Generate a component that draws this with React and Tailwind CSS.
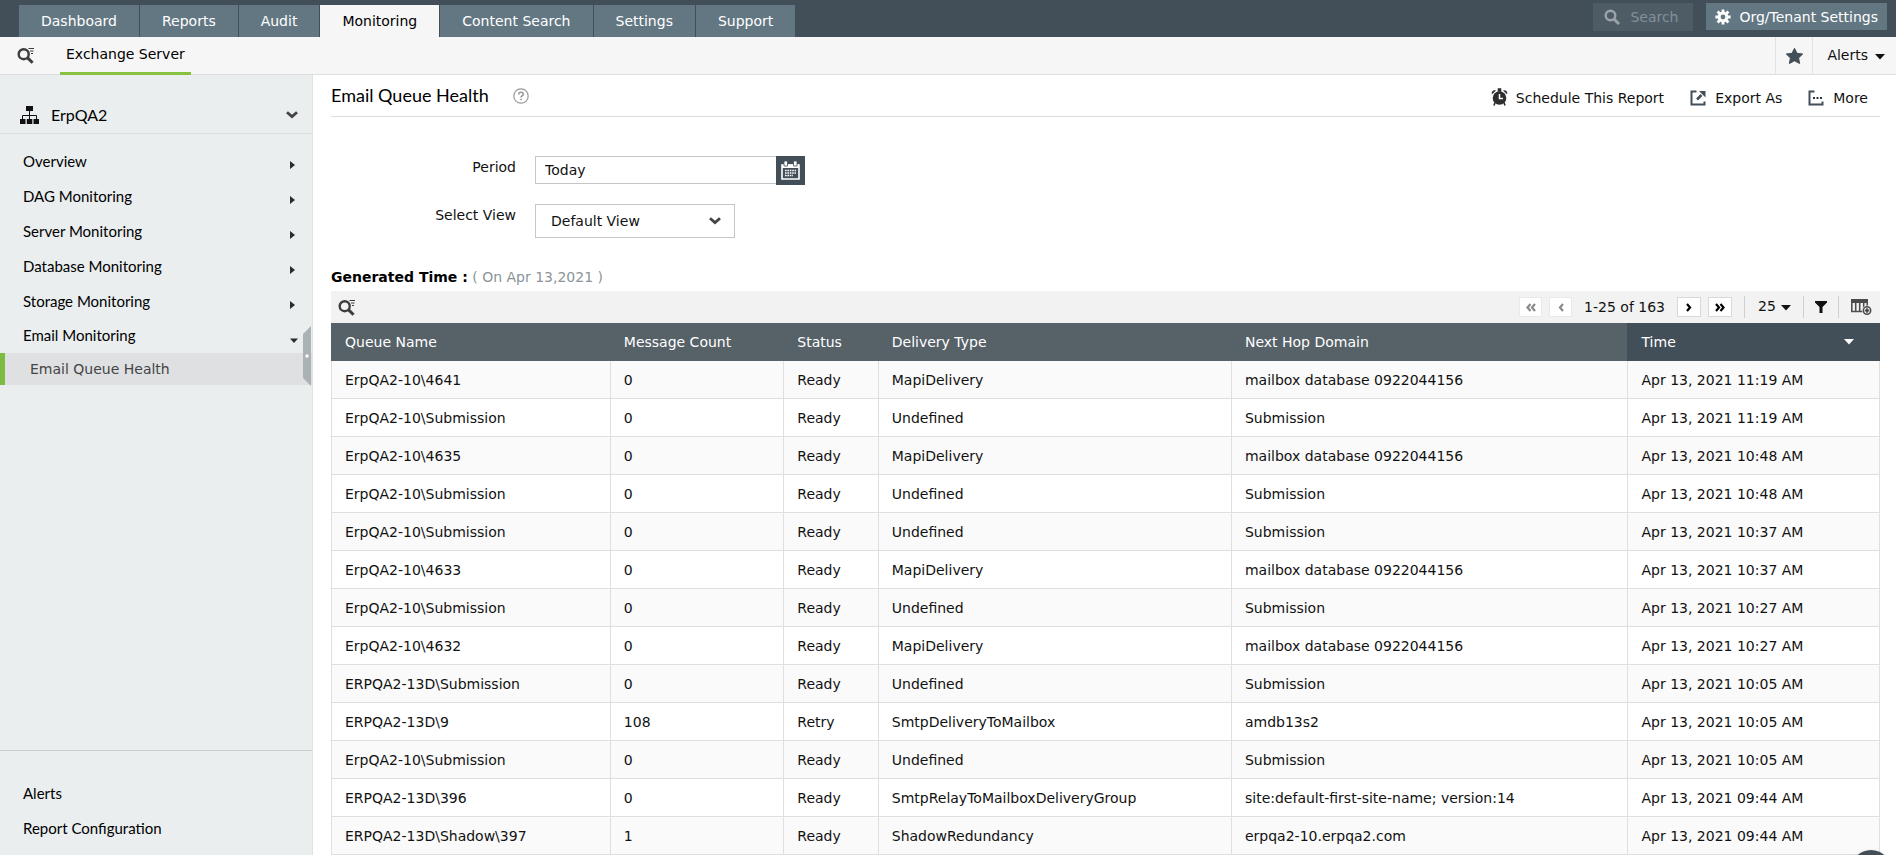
import React from "react";

const TABS = ["Dashboard", "Reports", "Audit", "Monitoring", "Content Search", "Settings", "Support"];

const MENU = [
  "Overview",
  "DAG Monitoring",
  "Server Monitoring",
  "Database Monitoring",
  "Storage Monitoring",
];

const ROWS = [
  ["ErpQA2-10\\4641", "0", "Ready", "MapiDelivery", "mailbox database 0922044156", "Apr 13, 2021 11:19 AM"],
  ["ErpQA2-10\\Submission", "0", "Ready", "Undefined", "Submission", "Apr 13, 2021 11:19 AM"],
  ["ErpQA2-10\\4635", "0", "Ready", "MapiDelivery", "mailbox database 0922044156", "Apr 13, 2021 10:48 AM"],
  ["ErpQA2-10\\Submission", "0", "Ready", "Undefined", "Submission", "Apr 13, 2021 10:48 AM"],
  ["ErpQA2-10\\Submission", "0", "Ready", "Undefined", "Submission", "Apr 13, 2021 10:37 AM"],
  ["ErpQA2-10\\4633", "0", "Ready", "MapiDelivery", "mailbox database 0922044156", "Apr 13, 2021 10:37 AM"],
  ["ErpQA2-10\\Submission", "0", "Ready", "Undefined", "Submission", "Apr 13, 2021 10:27 AM"],
  ["ErpQA2-10\\4632", "0", "Ready", "MapiDelivery", "mailbox database 0922044156", "Apr 13, 2021 10:27 AM"],
  ["ERPQA2-13D\\Submission", "0", "Ready", "Undefined", "Submission", "Apr 13, 2021 10:05 AM"],
  ["ERPQA2-13D\\9", "108", "Retry", "SmtpDeliveryToMailbox", "amdb13s2", "Apr 13, 2021 10:05 AM"],
  ["ErpQA2-10\\Submission", "0", "Ready", "Undefined", "Submission", "Apr 13, 2021 10:05 AM"],
  ["ERPQA2-13D\\396", "0", "Ready", "SmtpRelayToMailboxDeliveryGroup", "site:default-first-site-name; version:14", "Apr 13, 2021 09:44 AM"],
  ["ERPQA2-13D\\Shadow\\397", "1", "Ready", "ShadowRedundancy", "erpqa2-10.erpqa2.com", "Apr 13, 2021 09:44 AM"],
];

const HEADINGS = ["Queue Name", "Message Count", "Status", "Delivery Type", "Next Hop Domain"];

function SearchListIcon() {
  return (
    <svg width="18" height="17" viewBox="0 0 18 17" fill="none" stroke="#3d3d3d" aria-hidden="true">
      <circle cx="6.700" cy="7.200" r="5" strokeWidth="2.400" />
      <path d="M10.300 10.600l5.300 5.200" strokeWidth="3" />
      <path d="M11.500 1.500H17M13 4h3.500M14 6.500h2" strokeWidth="1.200" />
    </svg>
  );
}

function OrgIcon() {
  return (
    <svg width="19" height="18" viewBox="0 0 19 18" aria-hidden="true">
      <path d="M6 0h7v5H6zM0 13h5.500v5H0zM6.800 13h5.500v5H6.800zM13.500 13H19v5h-5.500z" fill="#111" />
      <path d="M9.500 5v8M2.500 13V9.500h14V13" fill="none" stroke="#111" />
    </svg>
  );
}

function Chevron() {
  return (
    <svg width="12" height="8" viewBox="0 0 12 8" fill="none" stroke="#444" strokeWidth="2.8" aria-hidden="true">
      <path d="M1 1.2l5 4.4 5-4.400" />
    </svg>
  );
}

function Caret({ className }) {
  return (
    <svg width="10" height="6" viewBox="0 0 10 6" className={className} aria-hidden="true">
      <path d="M0 0h10L5 5.5z" fill="currentColor" />
    </svg>
  );
}

function RightCaret() {
  return (
    <svg width="5" height="8" viewBox="0 0 5 8" aria-hidden="true">
      <path d="M0 0l5 4-5 4z" fill="#2b2b2b" />
    </svg>
  );
}

function GearIcon() {
  return (
    <svg width="16" height="16" viewBox="0 0 16 16" fill="none" stroke="#fff" aria-hidden="true">
      <circle cx="8" cy="8" r="3.9" strokeWidth="3" />
      <path
        d="M8 .4v3M8 12.6v3M.4 8h3M12.6 8h3M2.6 2.6l2.2 2.2M11.2 11.2l2.2 2.2M2.6 13.4l2.2-2.2M11.2 4.8l2.2-2.2"
        strokeWidth="2.8"
      />
    </svg>
  );
}

function ClockIcon() {
  return (
    <svg width="17" height="19" viewBox="0 0 17 19" aria-hidden="true">
      <circle cx="8.500" cy="10" r="6.8" fill="#2e2e2e" />
      <path d="M1 6.200C-.2 3.600 2.600 1.400 5 2.600zM16 6.200c1.200-2.600-1.600-4.800-4-3.600z" fill="#2e2e2e" />
      <path d="M7.500 1h2v2h-2zM4 14.500l-1 3M13 14.500l1 3" fill="#2e2e2e" stroke="#2e2e2e" strokeWidth="1.600" />
      <path d="M8.500 6v4.500H12" fill="none" stroke="#fff" strokeWidth="1.500" />
    </svg>
  );
}

function ExportIcon() {
  return (
    <svg width="16" height="16" viewBox="0 0 16 16" fill="none" stroke="#434f58" aria-hidden="true">
      <path d="M6.500 1.500h-5v13H14.500V11.500" strokeWidth="2" />
      <path d="M7 9.500l4.500-4.500" strokeWidth="2.600" />
      <path d="M9 1H15.500V7.500z" fill="#434f58" stroke="none" />
    </svg>
  );
}

function MoreIcon() {
  return (
    <svg width="16" height="16" viewBox="0 0 16 16" aria-hidden="true">
      <path d="M6.500 1.500H1.500v13H14.500V11.500" fill="none" stroke="#434f58" strokeWidth="2" />
      <path d="M5 7h2v2H5zM8.500 7h2v2h-2zM12 7h2v2h-2z" fill="#2b343a" />
    </svg>
  );
}

function CalendarIcon() {
  return (
    <svg width="19" height="19" viewBox="0 0 19 19" aria-hidden="true">
      <path d="M1 4h17v14H1z" fill="none" stroke="#fff" strokeWidth="1.600" />
      <path d="M1 3.500h17V7H1z" fill="#fff" />
      <path d="M3 0h3.500v5H3zM12.500 0H16v5h-3.500z" fill="#fff" stroke="#434f58" strokeWidth=".8" />
      <path d="M4 9.500h11M4 12h11M4 14.500h8" stroke="#fff" strokeWidth="1.500" strokeDasharray="1.600 .8" />
    </svg>
  );
}

function ColumnsIcon() {
  return (
    <svg width="21" height="18" viewBox="0 0 21 18" aria-hidden="true">
      <path d="M0 1h17v4H0z" fill="#4a4a4a" />
      <path d="M.8 4v9.500H12M4.700 5v8.500M8.700 5v8.500M12.700 5v5M16.200 4v5" fill="none" stroke="#4f4f4f" strokeWidth="1.600" />
      <circle cx="16" cy="12.500" r="5" fill="#f2f2f2" />
      <circle cx="16" cy="12.500" r="3.700" fill="none" stroke="#4a4a4a" strokeWidth="1.500" />
      <path d="M16 10.300v4.400M13.800 12.500h4.400" stroke="#4a4a4a" strokeWidth="1.800" />
    </svg>
  );
}

function PageButton({ label, disabled, double, back }) {
  return (
    <button
      type="button"
      aria-label={label}
      disabled={disabled}
      className={
        "flex h-5 items-center justify-center border bg-white " +
        (disabled ? "w-[23px] border-[#e9e9e9] text-[#8a8a8a]" : "w-6 border-[#d8d8d8] text-black")
      }
    >
      <svg
        width="10"
        height="9"
        viewBox="0 0 10 9"
        fill="none"
        stroke="currentColor"
        strokeWidth="2.2"
        className={back ? "rotate-180" : ""}
        aria-hidden="true"
      >
        <path d={double ? "M1 1l3 3.500-3 3.500M5.500 1l3 3.500-3 3.500" : "M3 1l3 3.500L3 8"} />
      </svg>
    </button>
  );
}

function TopBar() {
  return (
    <header className="flex h-[37px] shrink-0 items-end justify-between bg-[#434f58] pl-[19px] pr-[9px]">
      <nav className="flex h-8 gap-px">
        {TABS.map((t) => (
          <a
            key={t}
            href="#"
            className={
              "flex items-center whitespace-nowrap px-[22px] pb-px " +
              (t === "Monitoring" ? "bg-[#f6f6f6] text-black" : "bg-[#637783] text-white")
            }
          >
            {t}
          </a>
        ))}
      </nav>
      <div className="flex items-start gap-[13px] self-start pt-[3px]">
        <label className="flex h-7 w-[100px] items-center gap-[10px] bg-[#4e5c65] pl-[11px]">
          <svg width="16" height="16" viewBox="0 0 16 16" fill="none" stroke="#9ba4aa" className="shrink-0" aria-hidden="true">
            <circle cx="6.500" cy="6.500" r="4.800" strokeWidth="2.400" />
            <path d="M10 10l5 5" strokeWidth="3" />
          </svg>
          <input
            type="text"
            aria-label="Search"
            placeholder="Search"
            className="w-full min-w-0 bg-transparent outline-none placeholder:text-[#84909a]"
          />
        </label>
        <button type="button" className="flex h-[27px] items-center gap-2 whitespace-nowrap bg-[#637783] px-[9px] text-white">
          <GearIcon />
          Org/Tenant Settings
        </button>
      </div>
    </header>
  );
}

function SubNav() {
  return (
    <div className="flex h-[38px] shrink-0 justify-between border-b border-[#dedede] bg-[#f6f6f6]">
      <div className="flex pl-[17px]">
        <button type="button" aria-label="Find report" className="mr-[25px]">
          <SearchListIcon />
        </button>
        <a href="#" className="-mb-px flex items-center border-b-3 border-[#86c140] px-[6px] pb-[2px] text-black">
          Exchange Server
        </a>
      </div>
      <div className="flex">
        <button type="button" aria-label="Favourites" className="flex w-[38px] items-center justify-center border-x border-[#e2e2e2]">
          <svg width="17" height="16" viewBox="0 0 17 16" aria-hidden="true">
            <path
              d="M8.500.3l2.500 5 5.700.7-4.100 3.900 1 5.600-5.100-2.700-5.100 2.700 1-5.600L.3 6 6 5.300z"
              fill="#434f58"
              stroke="#434f58"
              strokeLinejoin="round"
            />
          </svg>
        </button>
        <button type="button" className="flex items-center gap-[7px] pb-px pl-[14px] pr-[11px]">
          Alerts
          <Caret className="mt-[3px]" />
        </button>
      </div>
    </div>
  );
}

function Sidebar() {
  return (
    <aside className="relative flex w-[313px] shrink-0 flex-col border-r border-[#dfe3e4] bg-[#eaeeef] font-[Lato,sans-serif] text-[15px] text-black">
      <button type="button" className="flex h-[59px] shrink-0 items-center border-b border-[#dcdfe0] pl-5 pr-[14px] pt-[22px] text-base">
        <OrgIcon />
        <span className="ml-3 flex-1 text-left">ErpQA2</span>
        <Chevron />
      </button>
      <nav className="flex flex-col pt-[10px]">
        {MENU.map((m) => (
          <a key={m} href="#" className="flex h-[35px] items-center justify-between pl-[23px] pr-[17px]">
            {m}
            <span className="pt-[6px]">
              <RightCaret />
            </span>
          </a>
        ))}
        <a href="#" className="flex h-[34px] items-center justify-between pl-[23px] pr-[14px]">
          Email Monitoring
          <Caret className="mt-[10px] w-2 text-[#2b2b2b]" />
        </a>
        <a
          href="#"
          className="flex h-8 items-center border-l-5 border-[#7dbb42] bg-[#dee0e2] pl-[25px] font-['DejaVu_Sans',Verdana,sans-serif] text-sm text-[#444]"
        >
          Email Queue Health
        </a>
      </nav>
      <nav className="mt-auto flex flex-col border-t border-[#c9cecf] pb-[9px] pt-[25px]">
        <a href="#" className="flex h-[35px] items-center pl-[23px]">
          Alerts
        </a>
        <a href="#" className="flex h-[35px] items-center pl-[23px]">
          Report Configuration
        </a>
      </nav>
      <button type="button" aria-label="Collapse menu" className="absolute right-[1px] top-[251px]">
        <svg width="8" height="60" viewBox="0 0 8 60" aria-hidden="true">
          <path d="M8 0v60L0 52V8z" fill="#abb2b5" />
          <circle cx="4" cy="30" r="1.700" fill="#fff" />
        </svg>
      </button>
    </aside>
  );
}

function ReportHeader() {
  return (
    <div className="flex h-[42px] items-center justify-between border-b border-[#dcdcdc]">
      <div className="flex items-center gap-6 pb-[2px]">
        <h1 className="font-[Lato,sans-serif] text-lg leading-6 text-black">Email Queue Health</h1>
        <button type="button" aria-label="Help" className="pt-[2px]">
          <svg width="16" height="16" viewBox="0 0 16 16" fill="none" stroke="#999" strokeWidth="1.200" aria-hidden="true">
            <circle cx="8" cy="8" r="7.200" />
            <path d="M5.800 6.500c0-3 4.400-2.800 4.400-.2C10.200 8 8 7.800 8 9.600M8 10.800v1.500" strokeWidth="1.600" />
          </svg>
        </button>
      </div>
      <div className="flex items-center gap-[26px] pr-3 pt-1">
        <button type="button" className="flex items-center gap-2">
          <ClockIcon />
          Schedule This Report
        </button>
        <button type="button" className="flex items-center gap-[9px]">
          <ExportIcon />
          Export As
        </button>
        <button type="button" className="flex items-center gap-[9px]">
          <MoreIcon />
          More
        </button>
      </div>
    </div>
  );
}

function Filters() {
  return (
    <div className="grid grid-cols-[185px_1fr] gap-x-[19px] gap-y-[19px] pt-[39px]">
      <label htmlFor="period" className="pt-px text-right leading-5">
        Period
      </label>
      <div className="flex h-[29px]">
        <input
          id="period"
          type="text"
          defaultValue="Today"
          className="h-7 w-[241px] border border-r-0 border-[#c4c7c9] px-[9px] outline-none"
        />
        <button type="button" aria-label="Pick a date" className="flex w-[29px] items-center justify-center bg-[#434f58]">
          <CalendarIcon />
        </button>
      </div>
      <label htmlFor="view" className="pt-px text-right leading-5">
        Select View
      </label>
      <div className="relative w-[200px]">
        <select id="view" className="h-[34px] w-full appearance-none border border-[#c4c7c9] bg-white pl-[15px] outline-none">
          <option>Default View</option>
        </select>
        <span className="pointer-events-none absolute inset-y-0 right-[14px] flex items-center">
          <Chevron />
        </span>
      </div>
    </div>
  );
}

function TableToolbar() {
  return (
    <div className="flex h-8 items-center justify-between bg-[#f2f2f2] pl-[7px] pr-2">
      <button type="button" aria-label="Search in table">
        <SearchListIcon />
      </button>
      <div className="flex items-center">
        <div className="flex gap-[7px]">
          <PageButton label="First page" disabled double back />
          <PageButton label="Previous page" disabled back />
        </div>
        <span className="mx-3">1-25 of 163</span>
        <div className="flex gap-[7px]">
          <PageButton label="Next page" />
          <PageButton label="Last page" double />
        </div>
        <div className="relative ml-3 flex h-[22px] items-center border-l border-[#cfcfcf]">
          <select aria-label="Rows per page" className="w-[58px] appearance-none bg-transparent pb-[3px] pl-[13px] outline-none">
            <option>25</option>
          </select>
          <Caret className="pointer-events-none absolute right-[12px] top-[9px]" />
        </div>
        <button type="button" aria-label="Filter" className="flex h-[22px] items-center border-x border-[#cfcfcf] px-[11px]">
          <svg width="12" height="12" viewBox="0 0 12 12" aria-hidden="true">
            <path d="M0 0h12v1.500L7.500 6v6h-3V6L0 1.500z" fill="#111" />
          </svg>
        </button>
        <button type="button" aria-label="Add or remove columns" className="pl-3">
          <ColumnsIcon />
        </button>
      </div>
    </div>
  );
}

function QueueTable() {
  return (
    <table className="w-full table-fixed border-separate border-spacing-0 text-left">
      <colgroup>
        <col className="w-[18%]" />
        <col className="w-[11.2%]" />
        <col className="w-[6.1%]" />
        <col className="w-[22.8%]" />
        <col className="w-[25.6%]" />
        <col />
      </colgroup>
      <thead>
        <tr className="h-[38px] text-white">
          {HEADINGS.map((h) => (
            <th key={h} scope="col" className="bg-[#566168] px-[14px] font-normal">
              {h}
            </th>
          ))}
          <th scope="col" aria-sort="descending" className="bg-[#434f58] pl-[14px] pr-[26px] font-normal">
            <button type="button" className="flex w-full items-center justify-between">
              Time
              <Caret />
            </button>
          </th>
        </tr>
      </thead>
      <tbody>
        {ROWS.map((row, i) => (
          <tr key={i} className="h-[38px] odd:bg-[#fafafa]">
            {row.map((cell, j) => (
              <td
                key={j}
                className="overflow-hidden whitespace-nowrap border-b border-l border-[#dfdfdf] px-[13px] last:border-r"
              >
                {cell}
              </td>
            ))}
          </tr>
        ))}
      </tbody>
    </table>
  );
}

export default function App() {
  return (
    <div className="relative flex h-screen flex-col overflow-hidden bg-white font-['DejaVu_Sans',Verdana,sans-serif] text-sm text-[#111]">
      <TopBar />
      <SubNav />
      <div className="flex min-h-0 flex-1">
        <Sidebar />
        <main className="min-w-0 flex-1 overflow-hidden pl-[18px] pr-4">
          <ReportHeader />
          <Filters />
          <p className="pb-1 pt-[29px] leading-5">
            <b className="text-black">Generated Time :</b> <span className="text-[#8b9499]">( On Apr 13,2021 )</span>
          </p>
          <TableToolbar />
          <QueueTable />
        </main>
      </div>
      <button
        type="button"
        aria-label="Scroll to top"
        className="absolute -bottom-[35px] right-[5px] size-10 rounded-full bg-[#434f58] shadow-md shadow-black/50"
      />
    </div>
  );
}
